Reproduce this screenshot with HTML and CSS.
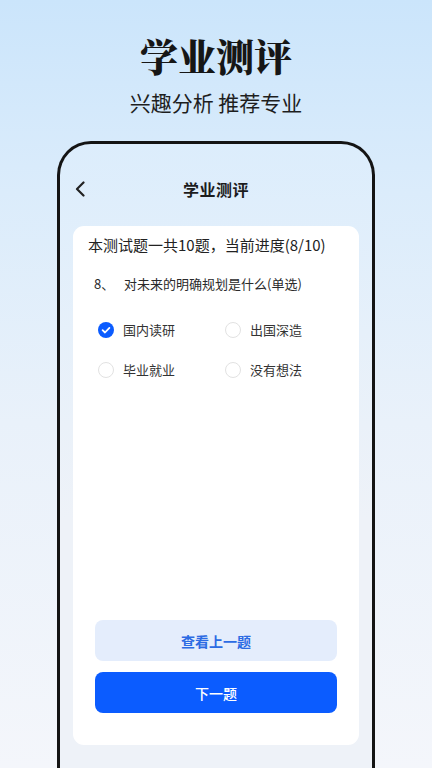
FILE: index.html
```html
<!DOCTYPE html>
<html lang="zh-CN">
<head>
<meta charset="utf-8">
<title>学业测评</title>
<link rel="stylesheet" href="styles.css">
</head>
<body>
<div class="page">
  <header class="hero">
    <h1 class="hero-title">学业测评</h1>
    <p class="hero-sub">兴趣分析 推荐专业</p>
  </header>
  <div class="phone">
    <div class="nav">
      <svg class="back" width="10" height="16" viewBox="0 0 10 16"><path d="M8.5 1.5 L2 8 L8.5 14.5" fill="none" stroke="#222" stroke-width="2.2" stroke-linecap="round" stroke-linejoin="round"/></svg>
      <div class="nav-title">学业测评</div>
    </div>
    <div class="card">
      <div class="progress">本测试题一共10题，当前进度(8/10)</div>
      <div class="question"><span class="qnum">8、</span>对未来的明确规划是什么(单选)</div>
      <div class="options">
        <div class="option">
          <span class="radio checked"><svg width="16" height="16" viewBox="0 0 16 16"><circle cx="8" cy="8" r="8" fill="#0b5cff"/><path d="M4.6 8.2 L7 10.5 L11.4 5.9" fill="none" stroke="#fff" stroke-width="1.8" stroke-linecap="round" stroke-linejoin="round"/></svg></span>
          <span class="label">国内读研</span>
        </div>
        <div class="option">
          <span class="radio"></span>
          <span class="label">出国深造</span>
        </div>
        <div class="option">
          <span class="radio"></span>
          <span class="label">毕业就业</span>
        </div>
        <div class="option">
          <span class="radio"></span>
          <span class="label">没有想法</span>
        </div>
      </div>
      <div class="actions">
        <button class="btn btn-prev">查看上一题</button>
        <button class="btn btn-next">下一题</button>
      </div>
    </div>
  </div>
</div>
</body>
</html>
```
FILE: styles.css
```css
* { box-sizing: border-box; }
html, body {
  margin: 0;
  padding: 0;
}
body {
  width: 432px;
  height: 768px;
  overflow: hidden;
  font-family: "Noto Sans CJK SC", "Noto Sans", sans-serif;
  background: linear-gradient(180deg, #cbe5fb 0%, #dbecfb 25%, #e9f1fa 55%, #f4f6fb 100%);
  color: #222;
}
.page {
  height: 768px;
  display: flex;
  flex-direction: column;
}
.hero {
  text-align: center;
  padding-top: 34px;
}
.hero-title {
  margin: 0;
  font-family: "Noto Serif CJK SC", "Noto Sans CJK SC", serif;
  font-size: 38px;
  line-height: 42px;
  font-weight: 900;
  color: #161616;
  letter-spacing: 0;
}
.hero-sub {
  margin: 13px 0 0;
  font-family: "Noto Sans CJK SC", sans-serif;
  font-size: 21px;
  line-height: 26px;
  font-weight: 400;
  color: #1e1e1e;
}
.phone {
  margin: 26px 57px 0;
  flex: 1;
  border: 3px solid #141414;
  border-bottom: none;
  border-radius: 34px 34px 0 0;
  background: linear-gradient(180deg, #dcedfc 0%, #e6f0fa 30%, #eef2f8 60%, #eef2f8 100%);
  display: flex;
  flex-direction: column;
}
.nav {
  position: relative;
  height: 30px;
  margin-top: 30px;
  display: flex;
  align-items: center;
  justify-content: center;
}
.back {
  position: absolute;
  left: 15px;
  top: 7px;
}
.nav-title {
  font-size: 16px;
  font-weight: 700;
  color: #1c1c1c;
  letter-spacing: 0.5px;
}
.card {
  margin: 22px 13px 0;
  height: 519px;
  background: #fff;
  border-radius: 11px;
  display: flex;
  flex-direction: column;
  padding: 9px 22px 32px 15px;
}
.progress {
  font-size: 15px;
  line-height: 20px;
  color: #222;
}
.question {
  margin-top: 19px;
  padding-left: 6px;
  font-size: 13px;
  line-height: 20px;
  color: #2a2a2a;
}
.qnum {
  display: inline-block;
  width: 30px;
}
.options {
  margin-top: 28px;
  padding-left: 10px;
  display: grid;
  grid-template-columns: 127px 127px;
  row-gap: 24px;
}
.option {
  display: flex;
  align-items: center;
  height: 16px;
}
.radio {
  width: 16px;
  height: 16px;
  border-radius: 50%;
  border: 1px solid #e2e2e2;
  margin-right: 9px;
  flex: none;
  display: block;
}
.radio.checked {
  border: none;
}
.radio svg { display: block; }
.label {
  font-size: 13px;
  line-height: 16px;
  color: #333;
}
.actions {
  margin-top: auto;
  margin-left: 7px;
  display: flex;
  flex-direction: column;
  gap: 11px;
}
.btn {
  height: 41px;
  width: 242px;
  border: none;
  border-radius: 8px;
  font-family: "Noto Sans CJK SC", sans-serif;
  font-size: 14px;
  font-weight: 700;
  padding: 0;
}
.btn-prev {
  background: #e4edfc;
  color: #2c6be3;
}
.btn-next {
  background: #0b5cff;
  color: #fff;
  font-weight: 500;
}
```
